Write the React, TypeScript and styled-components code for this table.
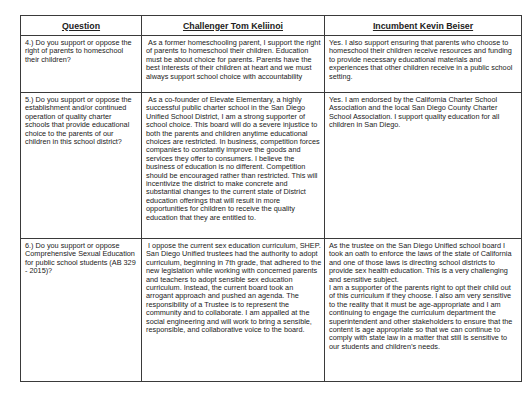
import styled, { createGlobalStyle } from "styled-components";

const GlobalStyle = createGlobalStyle`
  html, body {
    margin: 0;
    padding: 0;
    background: #ffffff;
  }
`;

const Page = styled.div`
  padding: 15px 0 0 20px;
  font-family: "Liberation Sans", Arial, sans-serif;
  color: #222222;
`;

const Table = styled.table`
  border-collapse: collapse;
  table-layout: fixed;
  width: 501px;
`;

const HeaderCell = styled.th`
  border: 1px solid #3a3a3a;
  height: 19px;
  padding: 0;
  font-size: 8.8px;
  font-weight: 700;
  text-decoration: underline;
  text-align: center;
  vertical-align: middle;
`;

const Row = styled.tr<{ $height: number }>`
  height: ${(p) => p.$height}px;
`;

const Cell = styled.td`
  border: 1px solid #3a3a3a;
  padding: 3px 1px 0 4px;
  vertical-align: top;
  font-size: 7.3px;
  line-height: 8.4px;
  white-space: nowrap;
  overflow: hidden;
`;

const Line = styled.div`
  display: block;
`;

type Answer = {
  height: number;
  question: string[];
  challenger: string[];
  incumbent: string[];
};

const rows: Answer[] = [
  {
    height: 57,
    question: [
      "4.) Do you support or oppose the",
      "right of parents to homeschool",
      "their children?",
    ],
    challenger: [
      "\u00a0As a former homeschooling parent, I support the right",
      "of parents to homeschool their children. Education",
      "must be about choice for parents. Parents have the",
      "best interests of their children at heart and we must",
      "always support school choice with accountability",
    ],
    incumbent: [
      "Yes. I also support ensuring that parents who choose to",
      "homeschool their children receive resources and funding",
      "to provide necessary educational materials and",
      "experiences that other children receive in a public school",
      "setting.",
    ],
  },
  {
    height: 146,
    question: [
      "5.) Do you support or oppose the",
      "establishment and/or continued",
      "operation of quality charter",
      "schools that provide educational",
      "choice to the parents of our",
      "children in this school district?",
    ],
    challenger: [
      "\u00a0As a co-founder of Elevate Elementary, a highly",
      "successful public charter school in the San Diego",
      "Unified School District, I am a strong supporter of",
      "school choice. This board will do a severe injustice to",
      "both the parents and children anytime educational",
      "choices are restricted. In business, competition forces",
      "companies to constantly improve the goods and",
      "services they offer to consumers. I believe the",
      "business of education is no different. Competition",
      "should be encouraged rather than restricted. This will",
      "incentivize the district to make concrete and",
      "substantial changes to the current state of District",
      "education offerings that will result in more",
      "opportunities for children to receive the quality",
      "education that they are entitled to.",
    ],
    incumbent: [
      "Yes. I am endorsed by the California Charter School",
      "Association and the local San Diego County Charter",
      "School Association. I support quality education for all",
      "children in San Diego.",
    ],
  },
  {
    height: 143,
    question: [
      "6.) Do you support or oppose",
      "Comprehensive Sexual Education",
      "for public school students (AB 329",
      "- 2015)?",
    ],
    challenger: [
      "\u00a0I oppose the current sex education curriculum, SHEP.",
      "San Diego Unified trustees had the authority to adopt",
      "curriculum, beginning in 7th grade, that adhered to the",
      "new legislation while working with concerned parents",
      "and teachers to adopt sensible sex education",
      "curriculum. Instead, the current board took an",
      "arrogant approach and pushed an agenda. The",
      "responsibility of a Trustee is to represent the",
      "community and to collaborate. I am appalled at the",
      "social engineering and will work to bring a sensible,",
      "responsible, and collaborative voice to the board.",
    ],
    incumbent: [
      "As the trustee on the San Diego Unified school board I",
      "took an oath to enforce the laws of the state of California",
      "and one of those laws is directing school districts to",
      "provide sex health education. This is a very challenging",
      "and sensitive subject.",
      "I am a supporter of the parents right to opt their child out",
      "of this curriculum if they choose. I also am very sensitive",
      "to the reality that it must be age-appropriate and I am",
      "continuing to engage the curriculum department the",
      "superintendent and other stakeholders to ensure that the",
      "content is age appropriate so that we can continue to",
      "comply with state law in a matter that still is sensitive to",
      "our students and children\u2019s needs.",
    ],
  },
];

const Lines = ({ lines }: { lines: string[] }) => (
  <>
    {lines.map((line, index) => (
      <Line key={index}>{line}</Line>
    ))}
  </>
);

function App() {
  return (
    <Page>
      <GlobalStyle />
      <Table>
        <colgroup>
          <col style={{ width: 121 }} />
          <col style={{ width: 183 }} />
          <col style={{ width: 197 }} />
        </colgroup>
        <thead>
          <tr>
            <HeaderCell>Question</HeaderCell>
            <HeaderCell>Challenger Tom Keliinoi</HeaderCell>
            <HeaderCell>Incumbent Kevin Beiser</HeaderCell>
          </tr>
        </thead>
        <tbody>
          {rows.map((row, index) => (
            <Row key={index} $height={row.height}>
              <Cell>
                <Lines lines={row.question} />
              </Cell>
              <Cell>
                <Lines lines={row.challenger} />
              </Cell>
              <Cell>
                <Lines lines={row.incumbent} />
              </Cell>
            </Row>
          ))}
        </tbody>
      </Table>
    </Page>
  );
}

export default App;
